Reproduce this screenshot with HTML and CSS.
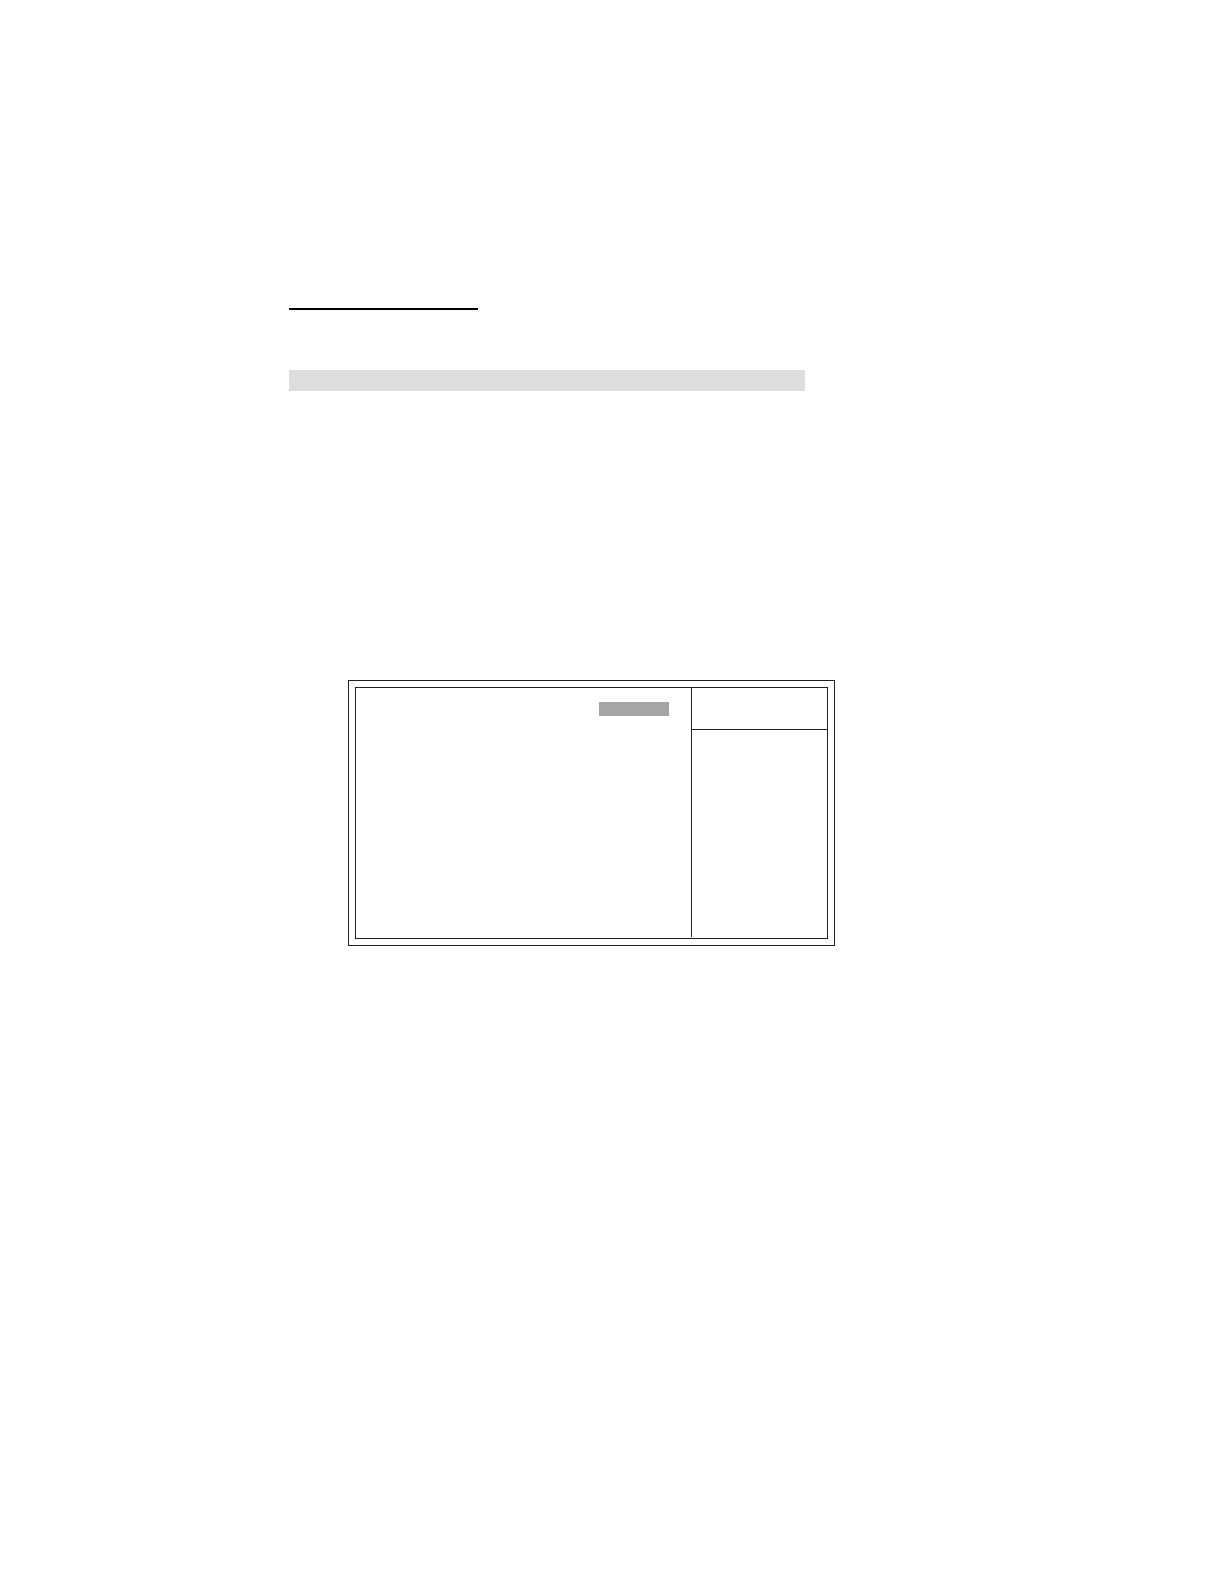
FILE: index.html
```html
<!DOCTYPE html>
<html lang="en">
<head>
    <meta charset="UTF-8">
    <meta name="viewport" content="width=device-width, initial-scale=1.0">
    <title>Setup Screen</title>
    <link rel="stylesheet" href="styles.css">
</head>
<body>

    <main class="page">
        <hr class="title-rule">
        <div class="section-bar"></div>

        <!-- Double framed setup screen -->
        <section class="screen">
            <div class="screen-inner">
                <div class="options">
                    <div class="selected"></div>
                </div>
                <aside class="help">
                    <div class="help-header"></div>
                </aside>
            </div>
        </section>
    </main>

</body>
</html>
```

FILE: styles.css
```css
* {
    margin: 0;
    padding: 0;
    box-sizing: border-box;
}

body {
    background: #fff;
    font-family: "Liberation Sans", Arial, sans-serif;
}

.page {
    min-height: 100vh;
    padding: 308px 389px 0 289px;
}

.title-rule {
    width: 189px;
    height: 2px;
    border: none;
    background: #000;
}

.section-bar {
    height: 21px;
    margin: 60px 30px 0 0;
    background: #ddd;
}

.screen {
    margin: 289px 0 0 59px;
    padding: 6px;
    border: 1px solid #231f20;
}

.screen-inner {
    display: grid;
    grid-template-columns: 1fr 136px;
    min-height: 252px;
    border: 1px solid #231f20;
}

.options {
    display: flex;
    justify-content: flex-end;
    align-items: flex-start;
    padding: 14px 22px;
}

.selected {
    width: 70px;
    height: 14px;
    background: #a6a5a5;
}

/* The divider stops just short of the bottom frame */
.help {
    margin-bottom: 1px;
    border-left: 1px solid #231f20;
}

.help-header {
    height: 42px;
    border-bottom: 1px solid #231f20;
}
```
